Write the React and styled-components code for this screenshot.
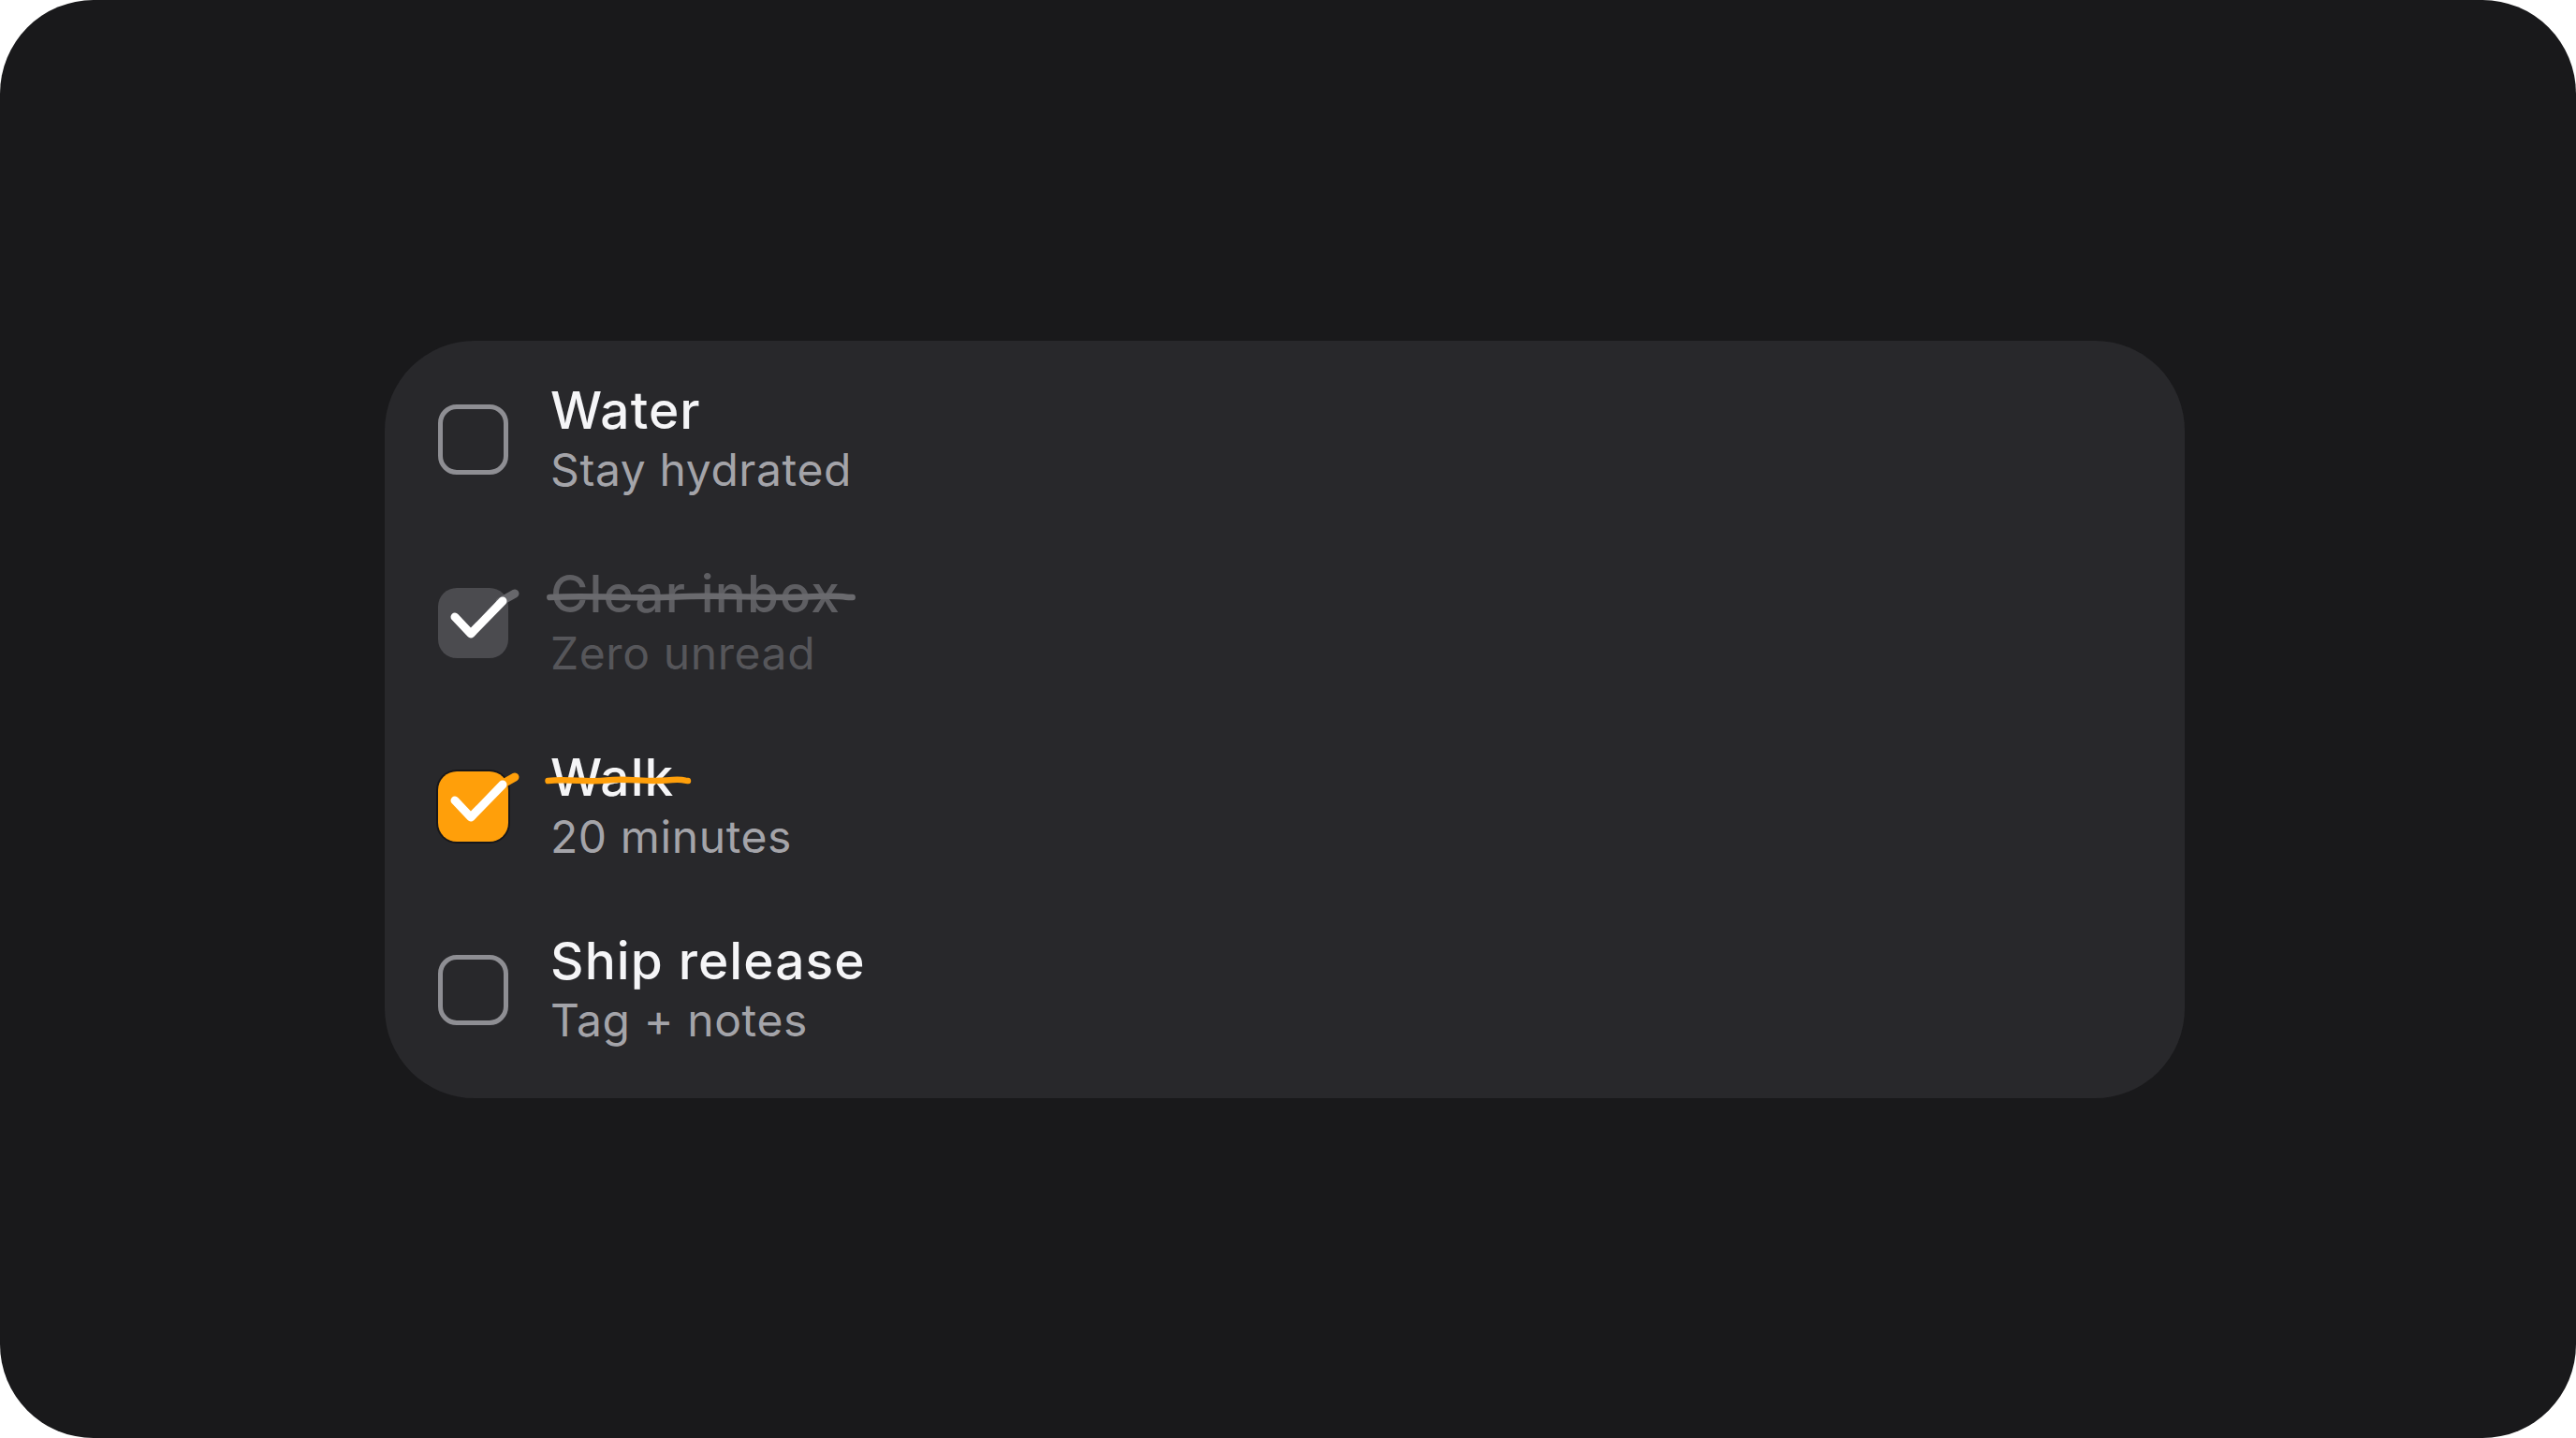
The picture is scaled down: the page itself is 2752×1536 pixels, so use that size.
import React from "react";
import styled, { createGlobalStyle, css } from "styled-components";

const Global = createGlobalStyle`
  html, body { margin: 0; padding: 0; background: #ffffff; }
  body { font-family: Inter, "Noto Sans", "Liberation Sans", sans-serif; }
  #root { width: 2752px; height: 1536px; }
`;

const Frame = styled.div`
  width: 2752px;
  height: 1536px;
  box-sizing: border-box;
  padding-right: 7px;
  border-radius: 100px;
  background: #19191b;
  display: flex;
  align-items: center;
  justify-content: center;
`;

const Card = styled.div`
  width: 1923px;
  box-sizing: border-box;
  background: #28282b;
  border-radius: 96px;
  padding: 8px 0 17px 57px;
  display: flex;
  flex-direction: column;
`;

const Row = styled.div`
  height: 196px;
  display: flex;
  align-items: center;
  gap: 45px;
`;

const Box = styled.div`
  position: relative;
  width: 75px;
  height: 75px;
  box-sizing: border-box;
  border-radius: 20px;
  flex: none;
  ${(p) =>
    p.$state === "empty" &&
    css`
      border: 5px solid #8e8e93;
    `}
  ${(p) =>
    p.$state === "done" &&
    css`
      background: #4b4b4f;
    `}
  ${(p) =>
    p.$state === "accent" &&
    css`
      background: #ff9f0a;
      box-shadow: 0 0 0 2px rgba(10, 10, 12, 0.55);
    `}
`;

const CheckSvg = styled.svg`
  position: absolute;
  left: 0;
  top: 0;
  width: 75px;
  height: 75px;
  overflow: visible;
`;

const Texts = styled.div`
  display: flex;
  flex-direction: column;
  gap: 5px;
`;

const Title = styled.div`
  font-size: 55px;
  font-weight: 500;
  line-height: 60px;
  letter-spacing: 1.1px;
  color: ${(p) => p.$color};
  white-space: nowrap;
`;

const Sub = styled.div`
  font-size: 48px;
  font-weight: 400;
  line-height: 58px;
  letter-spacing: 0.6px;
  color: ${(p) => p.$color};
  white-space: nowrap;
`;

const Struck = styled.span`
  position: relative;
  display: inline-block;
`;

const StrikeSvg = styled.svg`
  position: absolute;
  left: -4px;
  top: 28px;
  width: calc(100% + 20px);
  height: 12px;
  overflow: visible;
`;

function Check({ tail }) {
  return (
    <CheckSvg viewBox="0 0 75 75">
      <path
        d="M66 15 L82 6"
        stroke={tail}
        strokeWidth="9"
        strokeLinecap="round"
        fill="none"
      />
      <path
        d="M18 31 L35 49 L69 14"
        stroke="#ffffff"
        strokeWidth="9"
        strokeLinecap="round"
        strokeLinejoin="round"
        fill="none"
      />
    </CheckSvg>
  );
}

function Strike({ color, children }) {
  return (
    <Struck>
      {children}
      <StrikeSvg viewBox="0 0 100 12" preserveAspectRatio="none">
        <path
          d="M1 6 C 15 3.5, 28 8, 42 5.5 S 70 7.5, 84 5.5 S 96 6.5, 99 6"
          stroke={color}
          strokeWidth="6.5"
          strokeLinecap="round"
          fill="none"
          vectorEffect="non-scaling-stroke"
        />
      </StrikeSvg>
    </Struck>
  );
}

const items = [
  { title: "Water", sub: "Stay hydrated", state: "empty" },
  { title: "Clear inbox", sub: "Zero unread", state: "done" },
  { title: "Walk", sub: "20 minutes", state: "accent" },
  { title: "Ship release", sub: "Tag + notes", state: "empty" },
];

export default function App() {
  return (
    <>
      <Global />
      <Frame>
        <Card>
          {items.map((it) => {
            const dim = it.state === "done";
            const titleColor = dim ? "#5e5e62" : "#f5f5f7";
            const subColor = dim ? "#56565a" : "#a4a4a9";
            return (
              <Row key={it.title}>
                <Box $state={it.state}>
                  {it.state === "done" && <Check tail="#67676b" />}
                  {it.state === "accent" && <Check tail="#ff9f0a" />}
                </Box>
                <Texts>
                  <Title $color={titleColor}>
                    {it.state === "empty" ? (
                      it.title
                    ) : (
                      <Strike color={it.state === "done" ? "#6a6a6e" : "#ff9f0a"}>
                        {it.title}
                      </Strike>
                    )}
                  </Title>
                  <Sub $color={subColor}>{it.sub}</Sub>
                </Texts>
              </Row>
            );
          })}
        </Card>
      </Frame>
    </>
  );
}
